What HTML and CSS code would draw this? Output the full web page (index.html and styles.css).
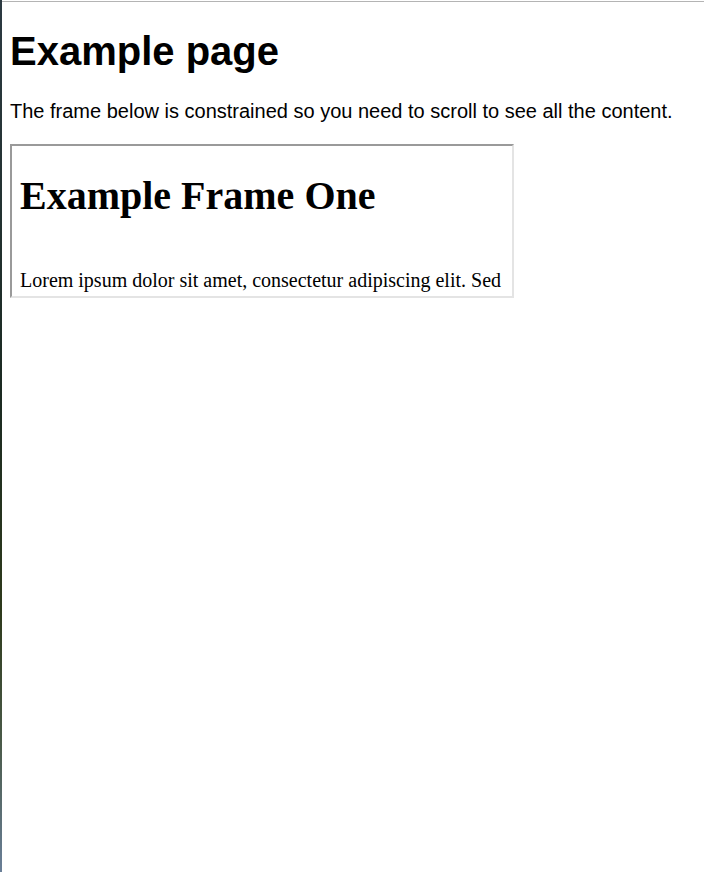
FILE: index.html
```html
<!DOCTYPE html>
<html lang="en">
<head>
<meta charset="UTF-8">
<meta name="viewport" content="width=device-width, initial-scale=1.0">
<title>Example page</title>
<link rel="stylesheet" href="styles.css">
</head>
<body>
    <div class="window">
        <div class="page">
            <h1>Example page</h1>
            <p>The frame below is constrained so you need to scroll to see all the content.</p>

            <!-- the framed document, clipped to its box -->
            <div class="frame">
                <div class="frame-body">
                    <h1>Example Frame One</h1>
                    <p>Lorem ipsum dolor sit amet, consectetur adipiscing elit. Sed</p>
                </div>
            </div>
        </div>
    </div>
</body>
</html>
```

FILE: styles.css
```css
html, body {
    margin: 0;
    padding: 0;
    height: 100%;
}

body {
    background: linear-gradient(to bottom, #2c3a42, #1b2a22 45%, #2e3a1c 70%, #4a5a48 85%, #6a7f98);
}

.window {
    height: 100%;
    margin-left: 2px;
    padding-top: 1px;
    background-color: #fff;
    box-sizing: border-box;
}

.page {
    height: 100%;
    box-sizing: border-box;
    border-top: 1px solid #b4b4b4;
    padding: 0 8px;
    font-family: "Liberation Sans", Arial, sans-serif;
    font-size: 20px;
    color: #000;
}

.page > h1 {
    font-size: 40px;
    font-weight: bold;
    line-height: 46px;
    margin: 26px 0 26px;
}

.page > p {
    line-height: 23px;
    margin: 0 0 21px;
}

.frame {
    width: 500px;
    height: 150px;
    border: 2px solid;
    border-color: #9a9a9a #e4e4e4 #e4e4e4 #9a9a9a;
    overflow: hidden;
    background-color: #fff;
}

.frame-body {
    padding: 0 10px 0 8px;
    font-family: "Liberation Serif", "Times New Roman", serif;
    font-size: 20px;
}

.frame-body h1 {
    font-size: 40px;
    font-weight: bold;
    line-height: 46px;
    margin: 27px 0 0;
}

.frame-body p {
    line-height: 23px;
    margin: 50px 0 0;
    white-space: nowrap;
}
```
